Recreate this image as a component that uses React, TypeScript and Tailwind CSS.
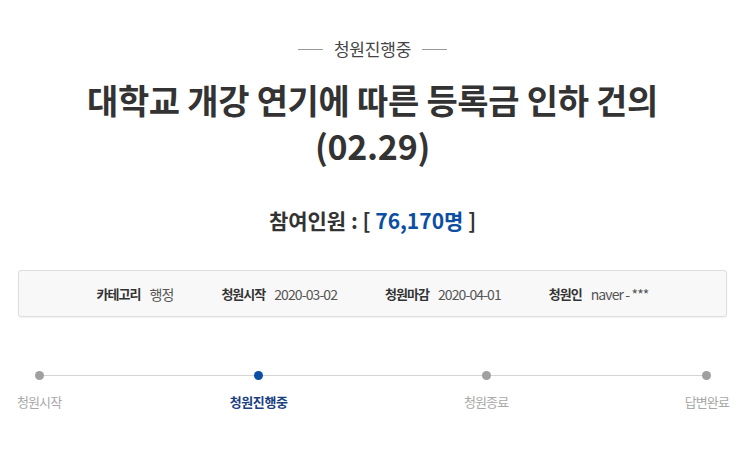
import React from "react";

const font = { fontFamily: '"Noto Sans CJK KR", "Noto Sans", sans-serif' };

const steps = [
  { label: "청원시작", active: false },
  { label: "청원진행중", active: true },
  { label: "청원종료", active: false },
  { label: "답변완료", active: false },
];

const info = [
  { k: "카테고리", v: "행정" },
  { k: "청원시작", v: "2020-03-02" },
  { k: "청원마감", v: "2020-04-01" },
  { k: "청원인", v: "naver - ***" },
];

export default function App() {
  return (
    <div className="w-[745px] h-[451px] bg-white overflow-hidden pt-[37px] text-[#333]" style={font}>
      <div className="flex items-center justify-center gap-[11px]">
        <span className="block w-[25px] h-px bg-[#999]" />
        <span className="text-[17px] leading-[24px] text-[#444] tracking-[-0.2px]">청원진행중</span>
        <span className="block w-[25px] h-px bg-[#999]" />
      </div>
      <h1 className="mt-[16px] text-center text-[34px] leading-[46px] font-bold tracking-[-0.3px] text-[#333]">
        대학교 개강 연기에 따른 등록금 인하 건의
        <br />
        (02.29)
      </h1>
      <div className="mt-[36px] text-center text-[21px] leading-[30px] font-bold text-[#333]">
        참여인원 : [ <span className="text-[#0b4ea2]">76,170명</span> ]
      </div>
      <div className="mx-[18px] mt-[35px] h-[47px] rounded-[3px] border border-[#dedede] bg-[#f8f8f8] shadow-[0_1px_2px_rgba(0,0,0,0.06)] flex items-center justify-center gap-[48px]">
        {info.map((it) => (
          <div key={it.k} className="flex items-center gap-[9px] leading-[18px]">
            <span className="text-[13px] font-bold text-[#333] tracking-[-1px]">{it.k}</span>
            <span className="text-[14px] text-[#555] tracking-[-0.9px]">{it.v}</span>
          </div>
        ))}
      </div>
      <div className="relative mt-[54px] px-[17px] pr-[16px]">
        <div className="absolute left-[40px] right-[40px] top-[4px] h-px bg-[#d4d4d4]" />
        <div className="relative flex justify-between">
          {steps.map((s, i) => (
            <div key={s.label} className={`flex flex-col items-center ${i === 1 ? "-ml-[8px]" : ""}`}>
              <span className={`block w-[9px] h-[9px] rounded-full ${s.active ? "bg-[#0b4ea2]" : "bg-[#a0a0a0]"}`} />
              <span
                className={`mt-[12px] text-[13px] leading-[20px] ${s.active ? "font-bold text-[#1b3f7f] tracking-[-0.4px]" : "text-[#a8a8a8] tracking-[-0.9px]"}`}
              >
                {s.label}
              </span>
            </div>
          ))}
        </div>
      </div>
    </div>
  );
}
